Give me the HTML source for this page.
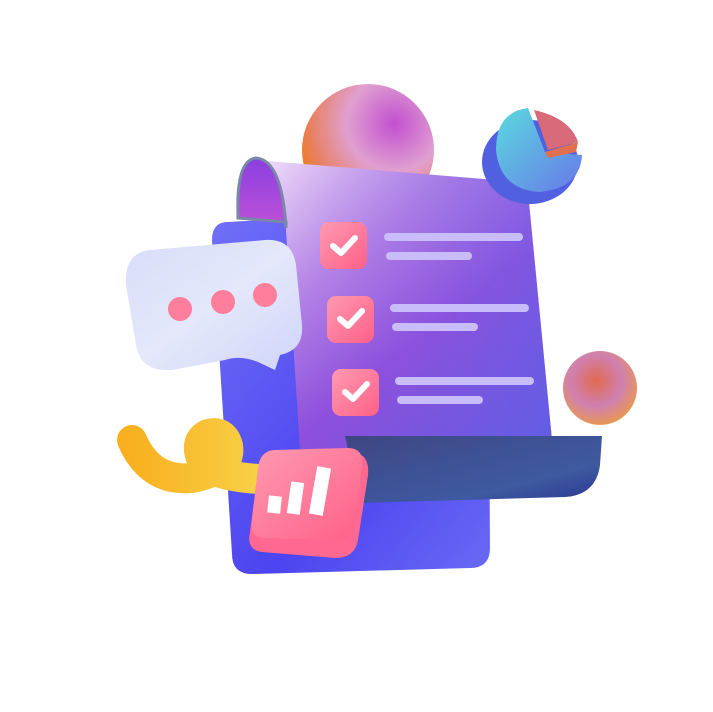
<!DOCTYPE html>
<html><head><meta charset="utf-8"><style>
html,body{margin:0;padding:0;background:#fff;width:713px;height:712px;overflow:hidden}
</style></head><body>
<svg width="713" height="712" viewBox="0 0 713 712" xmlns="http://www.w3.org/2000/svg">
<defs>
<radialGradient id="sph1" cx="0.7" cy="0.3" r="0.8">
<stop offset="0" stop-color="#c24fd0"/><stop offset="0.45" stop-color="#e0a0d0"/><stop offset="0.8" stop-color="#e88060"/><stop offset="1" stop-color="#f07a10"/></radialGradient>
<radialGradient id="sph2" cx="0.45" cy="0.4" r="0.7">
<stop offset="0" stop-color="#e06a50"/><stop offset="0.5" stop-color="#d080b0"/><stop offset="1" stop-color="#f0a030"/></radialGradient>
<linearGradient id="back" x1="0" y1="0" x2="1" y2="1">
<stop offset="0" stop-color="#7070f8"/><stop offset="0.6" stop-color="#4c44f0"/><stop offset="1" stop-color="#6a6af5"/></linearGradient>
<linearGradient id="sheet" x1="0.1" y1="0" x2="0.9" y2="1">
<stop offset="0" stop-color="#ecd8f8"/><stop offset="0.3" stop-color="#b88ae8"/><stop offset="0.6" stop-color="#8e4fdc"/><stop offset="1" stop-color="#5e5ae0"/></linearGradient>
<linearGradient id="sheetR" x1="0" y1="0" x2="1" y2="0">
<stop offset="0" stop-color="#a050d8" stop-opacity="0"/><stop offset="1" stop-color="#6a60e8" stop-opacity="0.5"/></linearGradient>
<linearGradient id="curl" x1="0" y1="0" x2="0" y2="1">
<stop offset="0" stop-color="#8a40e0"/><stop offset="1" stop-color="#c050d8"/></linearGradient>
<linearGradient id="band" x1="0" y1="0" x2="1" y2="1">
<stop offset="0" stop-color="#3e4684"/><stop offset="0.7" stop-color="#3e5aa0"/><stop offset="1" stop-color="#2a3590"/></linearGradient>
<linearGradient id="bub" x1="0" y1="0" x2="1" y2="1">
<stop offset="0" stop-color="#d8dcfa"/><stop offset="0.5" stop-color="#e4e8fa"/><stop offset="1" stop-color="#d0d4fa"/></linearGradient>
<linearGradient id="pink" x1="0" y1="0" x2="1" y2="1">
<stop offset="0" stop-color="#ff9ab0"/><stop offset="1" stop-color="#ff6088"/></linearGradient>
<linearGradient id="yel" x1="0" y1="0" x2="1" y2="0">
<stop offset="0" stop-color="#f8b020"/><stop offset="1" stop-color="#f8d850"/></linearGradient>
<linearGradient id="pie" x1="0" y1="0" x2="1" y2="1">
<stop offset="0" stop-color="#5adadf"/><stop offset="1" stop-color="#6878e8"/></linearGradient>
</defs>
<circle cx="368" cy="150" r="66" fill="url(#sph1)"/>
<path d="M228 222 L300 218 L470 232 Q488 234 488 250 L490 548 Q490 568 470 568 L252 574 Q232 574 232 554 L212 240 Q212 222 228 222Z" fill="url(#back)"/>
<path d="M255 160 L520 182 Q528 183 528 192 L552 440 L300 450 L286 230 Q284 175 255 160Z" fill="url(#sheet)"/>
<path d="M255 160 L520 182 Q528 183 528 192 L552 440 L300 450 L286 230 Q284 175 255 160Z" fill="url(#sheetR)"/>
<path d="M238 215 Q236 160 256 158 Q282 160 286 228 L286 222 L238 218Z" fill="url(#curl)" stroke="#7a88a8" stroke-width="3"/>
<ellipse cx="530" cy="162" rx="48" ry="42" fill="#5060e0"/>
<path d="M528 108 Q496 112 496 150 Q500 190 540 192 Q580 188 582 155 L545 152Z" fill="url(#pie)"/>
<path d="M534 110 L548 150 L578 142 Q570 118 534 110Z" fill="#d96a7a"/>
<path d="M545 152 L578 142 L576 152 L548 158Z" fill="#e07050"/>
<circle cx="600" cy="388" r="37" fill="url(#sph2)"/>
<path d="M345 436 L602 436 L600 465 Q596 495 565 497 L360 503Z" fill="url(#band)"/>
<g>
<rect x="320" y="222" width="47" height="47" rx="9" fill="url(#pink)"/>
<path d="M333 246 L341 253 L355 238" stroke="#fff" stroke-width="6" fill="none" stroke-linecap="round" stroke-linejoin="round"/>
<rect x="384" y="233" width="139" height="8" rx="4" fill="#c8bcfa"/>
<rect x="386" y="252" width="86" height="8" rx="4" fill="#c8bcfa"/>
<rect x="327" y="296" width="47" height="47" rx="9" fill="url(#pink)"/>
<path d="M340 319 L348 326 L362 311" stroke="#fff" stroke-width="6" fill="none" stroke-linecap="round" stroke-linejoin="round"/>
<rect x="390" y="304" width="139" height="8" rx="4" fill="#c8bcfa"/>
<rect x="392" y="323" width="86" height="8" rx="4" fill="#c8bcfa"/>
<rect x="332" y="369" width="47" height="47" rx="9" fill="url(#pink)"/>
<path d="M345 392 L353 399 L367 384" stroke="#fff" stroke-width="6" fill="none" stroke-linecap="round" stroke-linejoin="round"/>
<rect x="395" y="377" width="139" height="8" rx="4" fill="#c8bcfa"/>
<rect x="397" y="396" width="86" height="8" rx="4" fill="#c8bcfa"/>
</g>
<path d="M150 250 L265 240 Q292 238 296 265 L302 325 Q304 350 280 355 L275 370 L258 362 Q240 355 225 360 L172 370 Q140 372 136 345 L126 285 Q124 253 150 250Z" fill="url(#bub)"/>
<circle cx="180" cy="309" r="12" fill="#ff7e9c"/>
<circle cx="223" cy="302" r="12" fill="#ff7e9c"/>
<circle cx="265" cy="295" r="12" fill="#ff7e9c"/>
<path d="M132 440 Q150 482 192 478 Q232 470 228 446 Q224 430 208 434 Q192 442 204 465 Q222 480 290 480" stroke="url(#yel)" stroke-width="30" fill="none" stroke-linecap="round"/>
<path d="M272 455 L350 452 Q370 452 368 475 L358 540 Q355 558 335 558 L262 552 Q246 550 250 532 L258 470 Q260 456 272 455Z" fill="#ff6890"/>
<path d="M274 450 L348 448 Q364 448 362 466 L355 525 Q352 540 336 540 L264 538 Q250 537 252 522 L258 468 Q260 451 274 450Z" fill="url(#pink)"/>
<rect x="268" y="496" width="13" height="17" fill="#fff" transform="rotate(6 274 505)"/>
<rect x="289" y="482" width="13" height="32" fill="#fff" transform="rotate(8 295 498)"/>
<rect x="313" y="467" width="14" height="48" fill="#fff" transform="rotate(10 320 491)"/>
</svg>
</body></html>
